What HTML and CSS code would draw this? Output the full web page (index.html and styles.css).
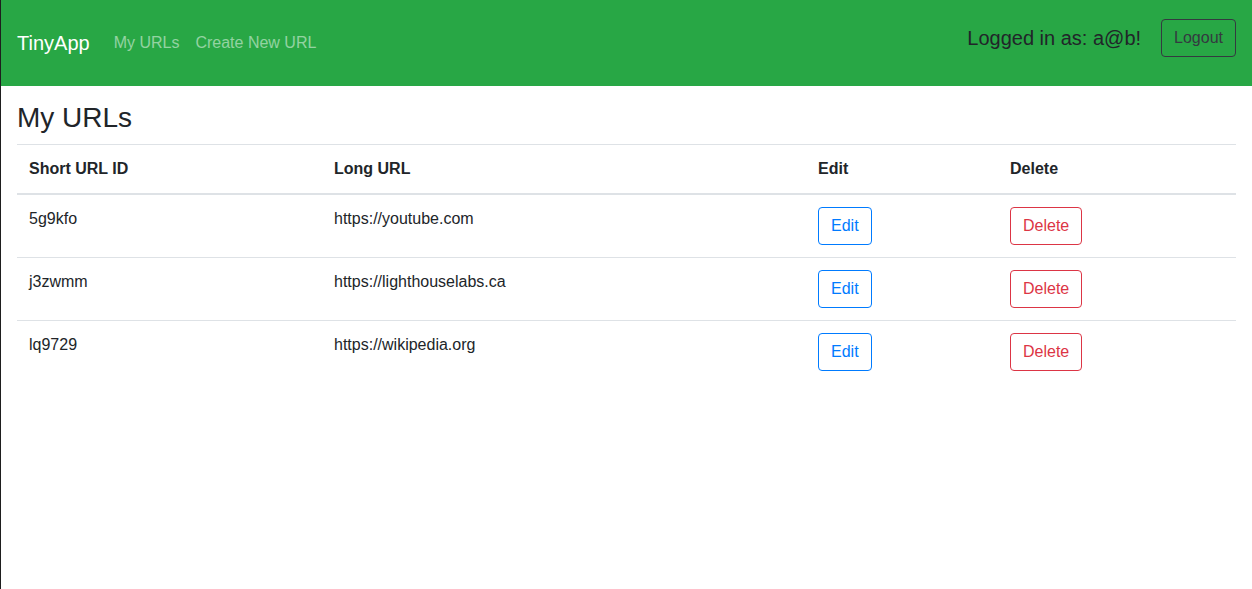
FILE: index.html
```html
<!DOCTYPE html>
<html lang="en">
<head>
<meta charset="utf-8">
<title>TinyApp</title>
<link rel="stylesheet" href="styles.css">
</head>
<body>
<nav class="navbar">
  <div class="nav-left">
    <a class="brand" href="#">TinyApp</a>
    <a class="nav-link" href="#">My URLs</a>
    <a class="nav-link" href="#">Create New URL</a>
  </div>
  <div class="nav-right">
    <span class="user">Logged in as: a@b!</span>
    <button class="btn btn-dark-outline">Logout</button>
  </div>
</nav>
<main class="content">
  <h3 class="title">My URLs</h3>
  <table class="table">
    <thead>
      <tr>
        <th class="c1">Short URL ID</th>
        <th class="c2">Long URL</th>
        <th class="c3">Edit</th>
        <th class="c4">Delete</th>
      </tr>
    </thead>
    <tbody>
      <tr>
        <td>5g9kfo</td>
        <td>https://youtube.com</td>
        <td><button class="btn btn-primary-outline">Edit</button></td>
        <td><button class="btn btn-danger-outline">Delete</button></td>
      </tr>
      <tr>
        <td>j3zwmm</td>
        <td>https://lighthouselabs.ca</td>
        <td><button class="btn btn-primary-outline">Edit</button></td>
        <td><button class="btn btn-danger-outline">Delete</button></td>
      </tr>
      <tr>
        <td>lq9729</td>
        <td>https://wikipedia.org</td>
        <td><button class="btn btn-primary-outline">Edit</button></td>
        <td><button class="btn btn-danger-outline">Delete</button></td>
      </tr>
    </tbody>
  </table>
</main>
</body>
</html>
```
FILE: styles.css
```css
html, body {
  margin: 0;
  padding: 0;
}
body {
  font-family: "Liberation Sans", Arial, sans-serif;
  font-size: 16px;
  line-height: 1.5;
  color: #212529;
  background: #fff;
  border-left: 1px solid #1e1e1e;
  min-height: 589px;
  box-sizing: border-box;
}
.navbar {
  height: 86px;
  box-sizing: border-box;
  background: #28a745;
  display: flex;
  align-items: center;
  justify-content: space-between;
  padding: 0 16px;
}
.nav-left {
  display: flex;
  align-items: center;
}
.brand {
  color: #fff;
  font-size: 20px;
  line-height: 30px;
  text-decoration: none;
  margin-right: 16px;
}
.nav-link {
  color: rgba(255, 255, 255, 0.5);
  text-decoration: none;
  padding: 0 8px;
  line-height: 24px;
}
.nav-right {
  display: flex;
  align-items: center;
  margin-bottom: 10px;
}
.user {
  font-size: 20px;
  line-height: 30px;
  color: #212529;
  margin-right: 20px;
}
.btn {
  font-family: inherit;
  font-size: 16px;
  line-height: 24px;
  padding: 6px 12px;
  border-radius: 4px;
  background: transparent;
  border: 1px solid;
  cursor: pointer;
}
.btn-dark-outline {
  color: #343a40;
  border-color: #343a40;
}
.btn-primary-outline {
  color: #007bff;
  border-color: #007bff;
}
.btn-danger-outline {
  color: #dc3545;
  border-color: #dc3545;
}
.content {
  padding: 0 16px;
}
.title {
  font-size: 28px;
  font-weight: 500;
  line-height: 34px;
  margin: 15px 0 9px;
}
.table {
  width: 100%;
  border-collapse: collapse;
  text-align: left;
}
.table th, .table td {
  padding: 12px;
  vertical-align: top;
  border-top: 1px solid #dee2e6;
}
.table thead th {
  font-weight: bold;
  border-bottom: 2px solid #dee2e6;
}
.c1 { width: 281px; }
.c2 { width: 460px; }
.c3 { width: 168px; }
```
